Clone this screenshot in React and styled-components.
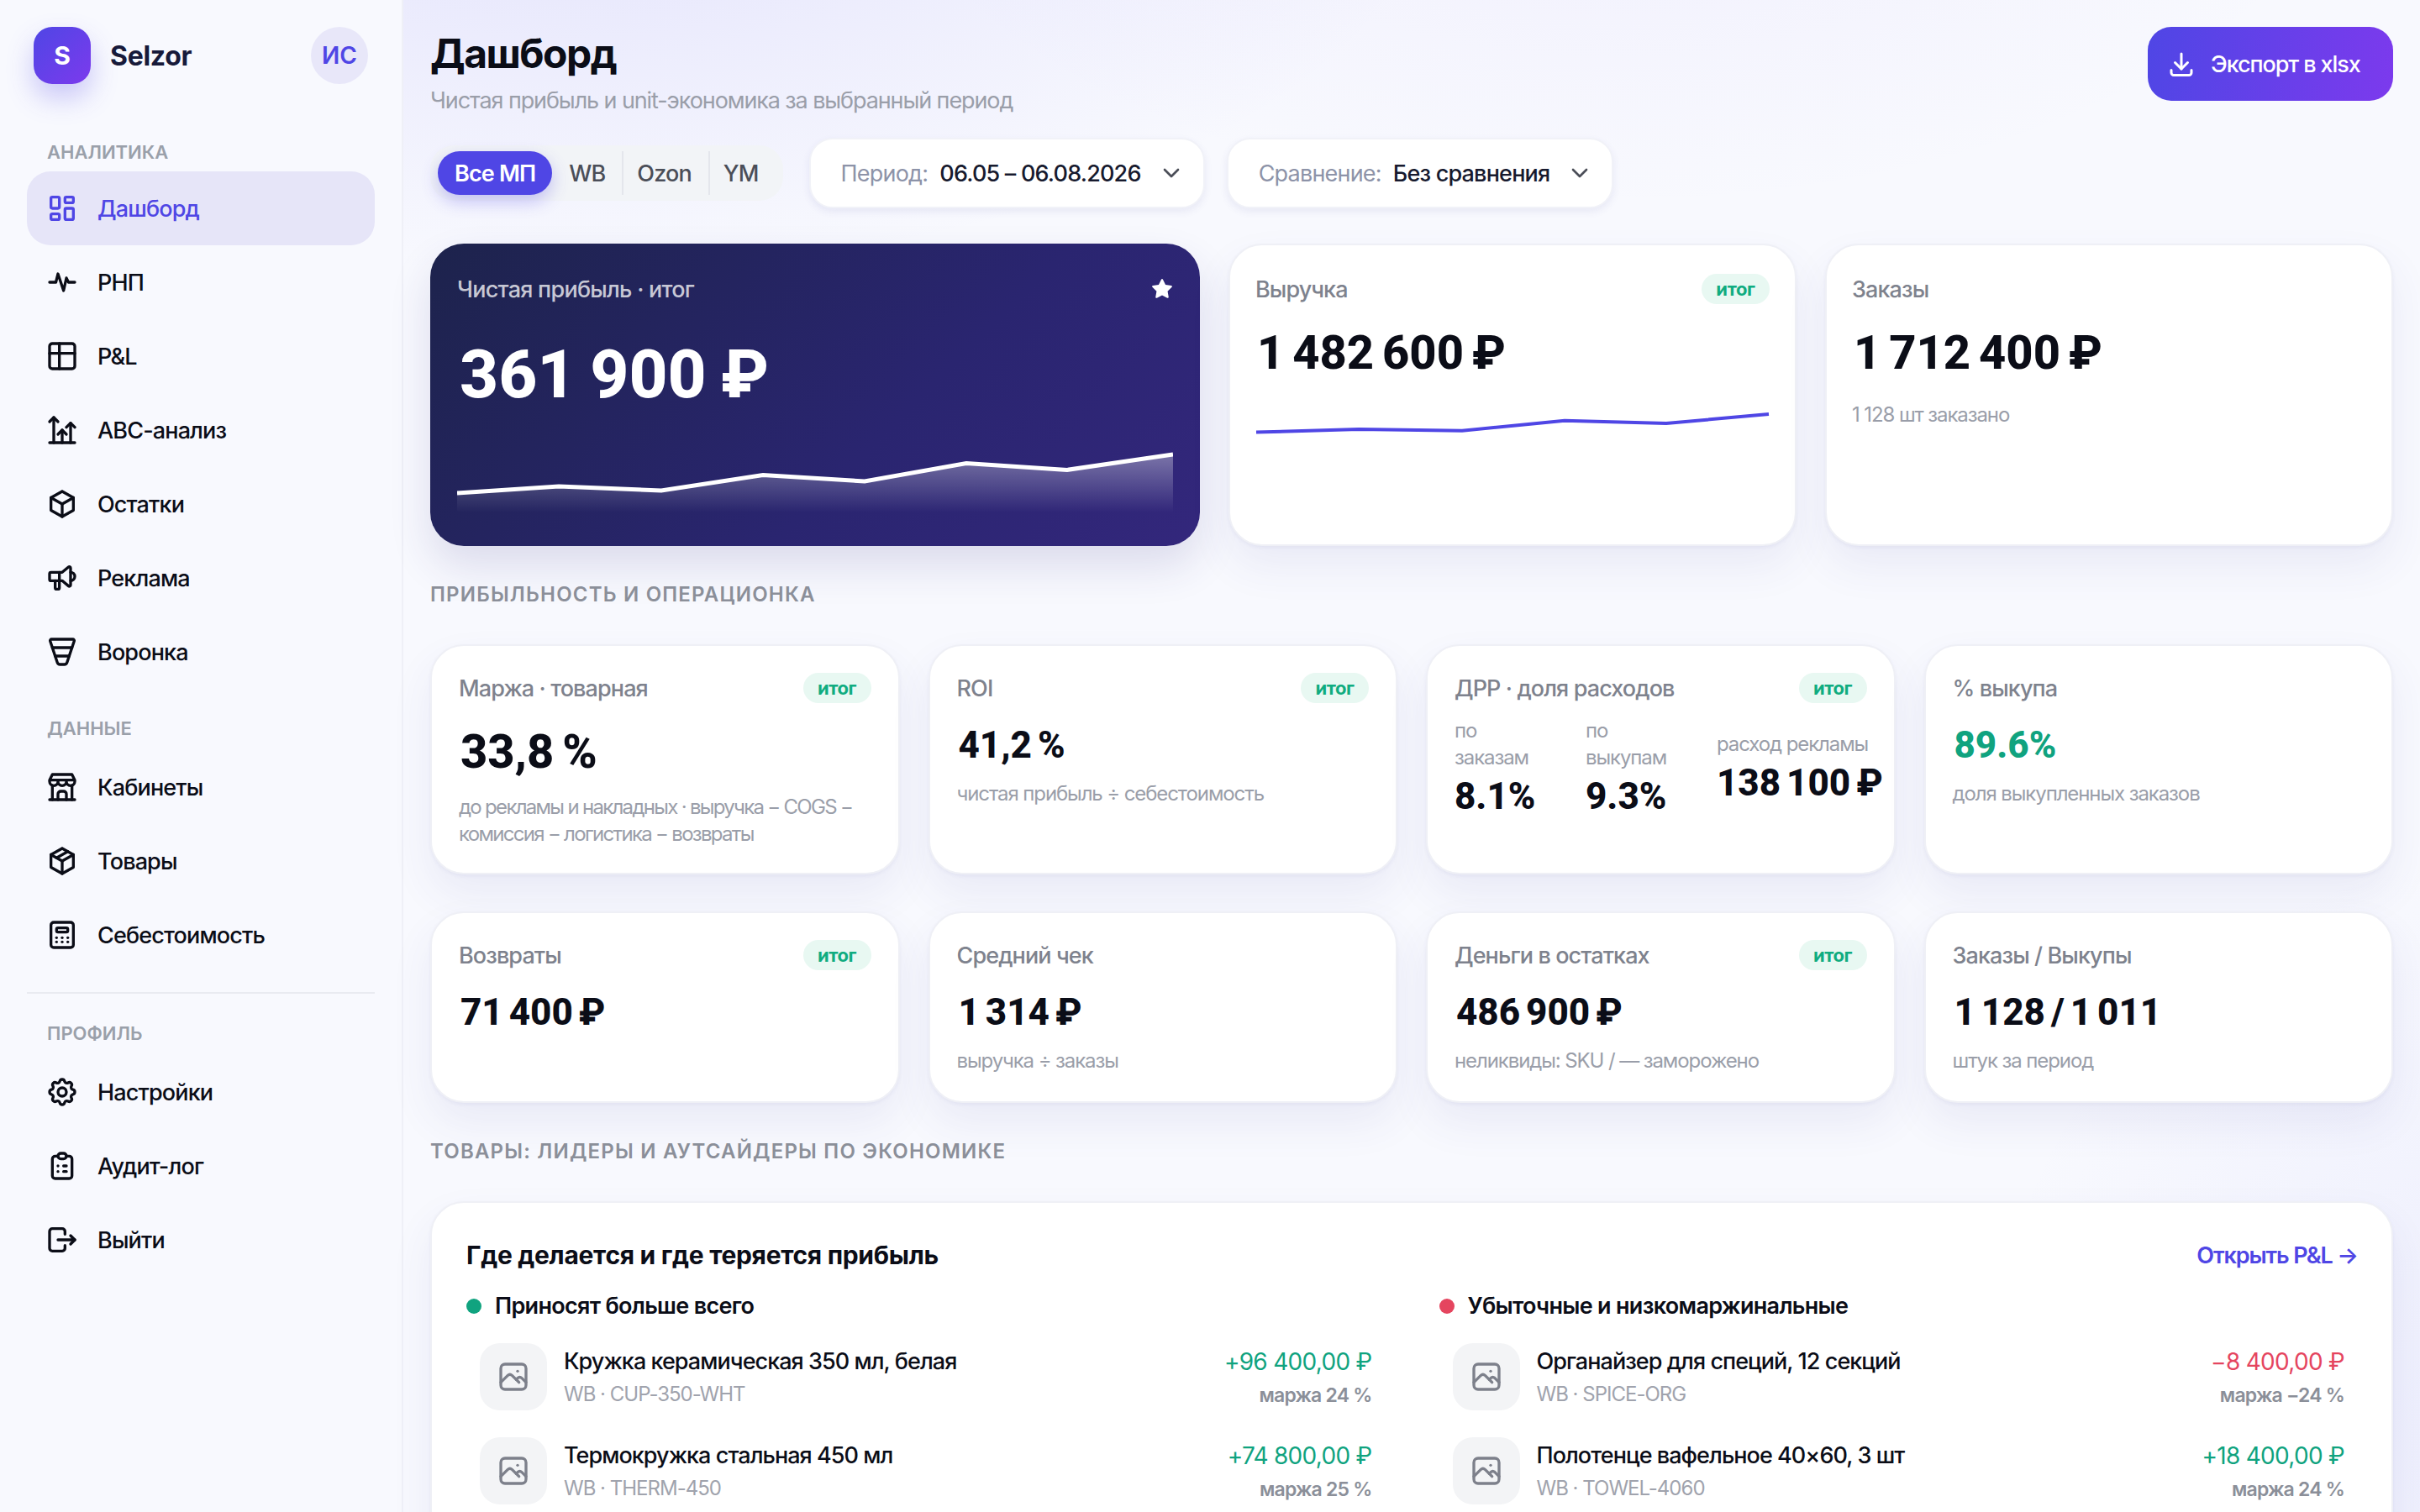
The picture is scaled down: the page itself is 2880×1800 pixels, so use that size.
import React from "react";
import styled, { createGlobalStyle } from "styled-components";
import {
  TbLayoutDashboard,
  TbActivityHeartbeat,
  TbTable,
  TbChartArrowsVertical,
  TbBox,
  TbSpeakerphone,
  TbChartFunnel,
  TbBuildingStore,
  TbPackage,
  TbCalculator,
  TbSettings,
  TbClipboardList,
  TbLogout,
  TbDownload,
  TbChevronDown,
  TbStarFilled,
  TbPhoto,
} from "react-icons/tb";

const GlobalStyle = createGlobalStyle`
  * { box-sizing: border-box; }
  html, body { margin: 0; padding: 0; }
  body {
    font-family: "Inter", "Noto Sans", sans-serif;
    color: #0b0d17;
    background: #f8f9fe;
  }
`;

const Shell = styled.div`
  display: grid;
  grid-template-columns: 480px 1fr;
  height: 100vh;
  overflow: hidden;
`;

const Sidebar = styled.aside`
  background: #f8f9fe;
  border-right: 2px solid #eff0f7;
  padding: 32px 32px 0;
`;

const Brand = styled.div`
  display: flex;
  align-items: center;
  padding: 0 8px;
  margin-bottom: 63px;
`;

const LogoMark = styled.div`
  width: 68px;
  height: 68px;
  border-radius: 22px;
  background: linear-gradient(135deg, #4f46e5, #7c3aed);
  box-shadow: 0 16px 32px rgba(79, 70, 229, 0.28);
  color: #fff;
  font-size: 30px;
  font-weight: 700;
  display: flex;
  align-items: center;
  justify-content: center;
`;

const BrandName = styled.div`
  margin-left: 23px;
  font-size: 32px;
  font-weight: 700;
  letter-spacing: -0.3px;
  color: #171a3a;
  flex: 1;
`;

const Avatar = styled.div`
  width: 68px;
  height: 68px;
  border-radius: 50%;
  background: #e8e7f9;
  color: #4f46e5;
  font-size: 28px;
  font-weight: 600;
  display: flex;
  align-items: center;
  justify-content: center;
`;

const NavLabel = styled.div`
  height: 36px;
  line-height: 36px;
  padding-left: 24px;
  margin-top: ${(p) => (p.$first ? "0" : "29px")};
  margin-bottom: ${(p) => (p.$first ? "5px" : "8px")};
  font-size: 22px;
  font-weight: 600;
  text-transform: uppercase;
  color: #9aa0aa;
`;

const NavItem = styled.div`
  height: 88px;
  display: flex;
  align-items: center;
  gap: 22px;
  padding-left: 22px;
  border-radius: 28px;
  font-size: 27px;
  font-weight: 500;
  letter-spacing: -0.85px;
  color: ${(p) => (p.$active ? "#4f46e5" : "#0b0d17")};
  background: ${(p) => (p.$active ? "#e6e5f8" : "transparent")};
  svg {
    width: 40px;
    height: 40px;
    flex: none;
  }
`;

const NavDivider = styled.div`
  height: 2px;
  background: #e9ebf1;
  margin-top: 24px;
`;

const Main = styled.main`
  padding: 32px 32px 0;
  min-width: 0;
  background:
    radial-gradient(1500px 700px at 8% -8%, rgba(99, 90, 240, 0.14), transparent 70%),
    radial-gradient(1300px 700px at 60% -12%, rgba(140, 110, 240, 0.08), transparent 70%),
    radial-gradient(900px 1000px at 104% 85%, rgba(99, 102, 241, 0.08), transparent 70%),
    #f8f9fe;
`;

const PageHead = styled.header`
  display: flex;
  justify-content: space-between;
  align-items: flex-start;
  margin-bottom: 24px;
`;

const PageTitle = styled.h1`
  margin: 0 0 4px;
  font-size: 48px;
  line-height: 64px;
  font-weight: 700;
  letter-spacing: -1.5px;
  color: #0b0d17;
`;

const PageSub = styled.div`
  font-size: 27px;
  line-height: 40px;
  letter-spacing: -1.1px;
  color: #9a9ea9;
`;

const ExportButton = styled.button`
  width: 292px;
  height: 88px;
  padding: 0 0 0 22px;
  border: none;
  border-radius: 28px;
  background: linear-gradient(100deg, #4f46e5, #7c3aed);
  color: #fff;
  font-family: inherit;
  font-size: 27px;
  font-weight: 500;
  letter-spacing: -1.1px;
  display: flex;
  align-items: center;
  gap: 17px;
  svg {
    width: 36px;
    height: 36px;
  }
`;

const Filters = styled.div`
  display: flex;
  align-items: center;
  gap: 26px;
  margin-bottom: 42px;
`;

const Segments = styled.div`
  display: flex;
  align-items: center;
  height: 66px;
  padding: 7px 9px;
  margin-right: 5px;
  border-radius: 28px;
  background: #f2f4f7;
`;

const Segment = styled.div`
  height: 52px;
  padding: 0 20px 0 ${(p) => (p.$divided ? "16px" : "20px")};
  display: flex;
  align-items: center;
  border-radius: ${(p) => (p.$active ? "26px" : "0")};
  font-size: 27px;
  letter-spacing: -0.85px;
  font-weight: ${(p) => (p.$active ? 600 : 500)};
  color: ${(p) => (p.$active ? "#fff" : "#4b4e58")};
  background: ${(p) => (p.$active ? "#4f46e5" : "transparent")};
  box-shadow: ${(p) => (p.$active ? "0 8px 20px rgba(79,70,229,.3)" : "none")};
  border-left: ${(p) => (p.$divided ? "2px solid #e4e6ec" : "none")};
`;

const Select = styled.div`
  height: 84px;
  padding: 0 22px 0 36px;
  display: flex;
  align-items: center;
  gap: 14px;
  background: #fff;
  border-radius: 28px;
  border: 2px solid #f1f2f8;
  box-shadow: 0 4px 10px rgba(70, 70, 150, 0.09);
  font-size: 27px;
  letter-spacing: -0.8px;
  white-space: nowrap;
  svg {
    width: 32px;
    height: 32px;
    color: #4b4e58;
    margin-left: 6px;
  }
`;

const SelectName = styled.span`
  color: #8d93a8;
`;

const SelectValue = styled.span`
  color: #171a2e;
  font-weight: 500;
`;

const TopGrid = styled.section`
  display: grid;
  grid-template-columns: 1.355fr 1fr 1fr;
  gap: 34px;
`;

const Card = styled.div`
  background: #fff;
  border: 2px solid #eff0f6;
  border-radius: 40px;
  padding: 32px;
  box-shadow: 0 24px 50px rgba(70, 70, 150, 0.08), 0 2px 4px rgba(70, 70, 150, 0.06);
  min-width: 0;
`;

const StatCard = styled(Card)`
  height: 360px;
  padding: 34px 30px 32px;
`;

const HeroCard = styled.div`
  height: 360px;
  padding: 36px 32px 40px;
  display: flex;
  flex-direction: column;
  border-radius: 40px;
  background: linear-gradient(135deg, #1d234c 0%, #2a2570 60%, #33277c 100%);
  box-shadow: 0 24px 50px rgba(50, 40, 130, 0.14);
  color: #fff;
`;

const CardHead = styled.div`
  display: flex;
  align-items: center;
  justify-content: space-between;
  min-height: 36px;
  margin-bottom: 24px;
`;

const HeroHead = styled(CardHead)`
  margin-bottom: 36px;
  svg {
    width: 26px;
    height: 26px;
  }
`;

const HeroLabel = styled.div`
  font-size: 27px;
  font-weight: 500;
  letter-spacing: -0.75px;
  color: rgba(255, 255, 255, 0.76);
`;

const HeroValue = styled.div`
  font-family: "Roboto", "Inter", sans-serif;
  font-size: 80px;
  line-height: 96px;
  font-weight: 800;
  word-spacing: -3px;
  padding-left: 3px;
`;

const HeroChart = styled.svg`
  display: block;
  width: 100%;
  height: 80px;
  margin-top: auto;
`;

const LineChart = styled.svg`
  display: block;
  width: 100%;
  height: 40px;
  margin-top: 28px;
`;

const CardLabel = styled.div`
  font-size: 27px;
  font-weight: 500;
  letter-spacing: -0.9px;
  color: #7e828d;
`;

const Badge = styled.span`
  width: 81px;
  height: 36px;
  display: flex;
  align-items: center;
  justify-content: center;
  border-radius: 18px;
  background: #e8f8f2;
  color: #10ac80;
  font-size: 22px;
  font-weight: 700;
  letter-spacing: -0.4px;
`;

const Value = styled.div`
  font-family: "Roboto", "Inter", sans-serif;
  font-size: ${(p) => (p.$big ? "56px" : "44px")};
  line-height: ${(p) => (p.$big ? "68px" : "52px")};
  font-weight: 800;
  word-spacing: -4px;
  color: ${(p) => (p.$good ? "#10a37f" : "#0b0d17")};
  margin-bottom: ${(p) => (p.$tight ? "24px" : "16px")};
  padding-left: 2px;
  white-space: nowrap;
`;

const Note = styled.div`
  font-size: 24px;
  line-height: 32px;
  letter-spacing: ${(p) => (p.$dense ? "-1.7px" : "-1.1px")};
  color: #9a9ea9;
`;

const StackNote = styled(Note)`
  width: min-content;
`;

const SectionTitle = styled.h2`
  margin: 40px 0 41px;
  font-size: 24px;
  line-height: 36px;
  font-weight: 600;
  letter-spacing: 1.2px;
  text-transform: uppercase;
  color: #8b8f99;
`;

const KpiGrid = styled.section`
  display: grid;
  grid-template-columns: repeat(4, 1fr);
  gap: 44px 34px;
`;

const KpiCard = styled(Card)`
  height: ${(p) => (p.$short ? "228px" : "274px")};
`;

const Split = styled.div`
  display: grid;
  grid-template-columns: 132px 132px auto;
  column-gap: 24px;
  align-items: center;
  margin-top: -7px;
`;

const SplitValue = styled(Value)`
  margin: 4px 0 0;
  padding-left: 0;
`;

const Panel = styled(Card)`
  padding: 42px 40px 200px 41px;
`;

const PanelHead = styled.div`
  display: flex;
  justify-content: space-between;
  align-items: center;
  margin-bottom: 23px;
`;

const PanelTitle = styled.div`
  font-size: 30px;
  line-height: 40px;
  font-weight: 700;
  letter-spacing: -0.3px;
`;

const PanelLink = styled.div`
  font-size: 27px;
  font-weight: 600;
  letter-spacing: -1.1px;
  color: #4f46e5;
`;

const Columns = styled.div`
  display: grid;
  grid-template-columns: 1fr 1fr;
  column-gap: 64px;
`;

const ColumnTitle = styled.div`
  display: flex;
  align-items: center;
  gap: 16px;
  font-size: 27px;
  line-height: 36px;
  font-weight: 600;
  letter-spacing: -0.7px;
  margin-bottom: 10px;
`;

const Dot = styled.span`
  width: 18px;
  height: 18px;
  border-radius: 50%;
  background: ${(p) => (p.$bad ? "#e5455f" : "#10a37f")};
`;

const ProductRow = styled.div`
  display: flex;
  align-items: center;
  gap: 20px;
  padding: 16px;
`;

const Thumb = styled.div`
  width: 80px;
  height: 80px;
  flex: none;
  border-radius: 24px;
  background: #f3f4f6;
  color: #7d808b;
  display: flex;
  align-items: center;
  justify-content: center;
  svg {
    width: 40px;
    height: 40px;
  }
`;

const ProductInfo = styled.div`
  flex: 1;
  min-width: 0;
`;

const ProductName = styled.div`
  font-size: 27px;
  line-height: 36px;
  font-weight: 500;
  letter-spacing: -0.95px;
  margin-bottom: 5px;
`;

const ProductSku = styled.div`
  font-size: 24px;
  line-height: 32px;
  letter-spacing: -1px;
  color: #a0a3ad;
`;

const ProductNumbers = styled.div`
  text-align: right;
`;

const Amount = styled.div`
  font-size: 28px;
  line-height: 36px;
  letter-spacing: -0.7px;
  color: ${(p) => (p.$bad ? "#e5455f" : "#10a37f")};
  margin: 2px 0 6px;
`;

const MarginText = styled.div`
  font-size: 23px;
  line-height: 32px;
  font-weight: 600;
  letter-spacing: -0.8px;
  color: #8b8f99;
`;

const navGroups = [
  {
    title: "Аналитика",
    items: [
      ["Дашборд", TbLayoutDashboard],
      ["РНП", TbActivityHeartbeat],
      ["P&L", TbTable],
      ["ABC-анализ", TbChartArrowsVertical],
      ["Остатки", TbBox],
      ["Реклама", TbSpeakerphone],
      ["Воронка", TbChartFunnel],
    ],
  },
  {
    title: "Данные",
    items: [
      ["Кабинеты", TbBuildingStore],
      ["Товары", TbPackage],
      ["Себестоимость", TbCalculator],
    ],
  },
  {
    title: "Профиль",
    items: [
      ["Настройки", TbSettings],
      ["Аудит-лог", TbClipboardList],
      ["Выйти", TbLogout],
    ],
  },
];

const leaders = [
  { name: "Кружка керамическая 350 мл, белая", sku: "WB · CUP-350-WHT", amount: "+96 400,00 ₽", margin: "маржа 24 %" },
  { name: "Термокружка стальная 450 мл", sku: "WB · THERM-450", amount: "+74 800,00 ₽", margin: "маржа 25 %" },
];

const losers = [
  { name: "Органайзер для специй, 12 секций", sku: "WB · SPICE-ORG", amount: "−8 400,00 ₽", margin: "маржа −24 %", bad: true },
  { name: "Полотенце вафельное 40×60, 3 шт", sku: "WB · TOWEL-4060", amount: "+18 400,00 ₽", margin: "маржа 24 %" },
];

const heroPoints = "0,57 121,49 243,54 364,35.5 485,43 606,21.6 726,29.4 852,11";

const ProductList = ({ items }) =>
  items.map((item) => (
    <ProductRow key={item.sku}>
      <Thumb>
        <TbPhoto />
      </Thumb>
      <ProductInfo>
        <ProductName>{item.name}</ProductName>
        <ProductSku>{item.sku}</ProductSku>
      </ProductInfo>
      <ProductNumbers>
        <Amount $bad={item.bad}>{item.amount}</Amount>
        <MarginText>{item.margin}</MarginText>
      </ProductNumbers>
    </ProductRow>
  ));

const App = () => {
  return (
    <>
      <GlobalStyle />
      <Shell>
        <Sidebar>
          <Brand>
            <LogoMark>S</LogoMark>
            <BrandName>Selzor</BrandName>
            <Avatar>ИС</Avatar>
          </Brand>
          {navGroups.map((group, i) => (
            <React.Fragment key={group.title}>
              {i === 2 && <NavDivider />}
              <NavLabel $first={i === 0}>{group.title}</NavLabel>
              {group.items.map(([label, Icon]) => (
                <NavItem key={label} $active={label === "Дашборд"}>
                  <Icon />
                  {label}
                </NavItem>
              ))}
            </React.Fragment>
          ))}
        </Sidebar>

        <Main>
          <PageHead>
            <div>
              <PageTitle>Дашборд</PageTitle>
              <PageSub>Чистая прибыль и unit-экономика за выбранный период</PageSub>
            </div>
            <ExportButton>
              <TbDownload />
              Экспорт в xlsx
            </ExportButton>
          </PageHead>

          <Filters>
            <Segments>
              <Segment $active>Все МП</Segment>
              <Segment>WB</Segment>
              <Segment $divided>Ozon</Segment>
              <Segment $divided>YM</Segment>
            </Segments>
            <Select>
              <SelectName>Период:</SelectName>
              <SelectValue>06.05 – 06.08.2026</SelectValue>
              <TbChevronDown />
            </Select>
            <Select>
              <SelectName>Сравнение:</SelectName>
              <SelectValue>Без сравнения</SelectValue>
              <TbChevronDown />
            </Select>
          </Filters>

          <TopGrid>
            <HeroCard>
              <HeroHead>
                <HeroLabel>Чистая прибыль · итог</HeroLabel>
                <TbStarFilled />
              </HeroHead>
              <HeroValue>361 900 ₽</HeroValue>
              <HeroChart viewBox="0 0 852 80">
                <defs>
                  <linearGradient id="heroFill" x1="0" y1="0" x2="0" y2="1">
                    <stop offset="0%" stopColor="#fff" stopOpacity="0.36" />
                    <stop offset="100%" stopColor="#fff" stopOpacity="0" />
                  </linearGradient>
                </defs>
                <polygon points={`0,80 ${heroPoints} 852,80`} fill="url(#heroFill)" />
                <polyline points={heroPoints} fill="none" stroke="#fff" strokeWidth="5" />
              </HeroChart>
            </HeroCard>
            <StatCard>
              <CardHead>
                <CardLabel>Выручка</CardLabel>
                <Badge>итог</Badge>
              </CardHead>
              <Value $big>1 482 600 ₽</Value>
              <LineChart viewBox="0 0 610 40">
                <polyline
                  points="0,32.6 122,29 245,30.8 367,18.7 488,22 610,11"
                  fill="none"
                  stroke="#4f46e5"
                  strokeWidth="4"
                />
              </LineChart>
            </StatCard>
            <StatCard>
              <CardHead>
                <CardLabel>Заказы</CardLabel>
              </CardHead>
              <Value $big $tight>1 712 400 ₽</Value>
              <Note>1 128 шт заказано</Note>
            </StatCard>
          </TopGrid>

          <SectionTitle>Прибыльность и операционка</SectionTitle>
          <KpiGrid>
            <KpiCard>
              <CardHead>
                <CardLabel>Маржа · товарная</CardLabel>
                <Badge>итог</Badge>
              </CardHead>
              <Value $big>33,8 %</Value>
              <Note $dense>до рекламы и накладных · выручка − COGS − комиссия − логистика − возвраты</Note>
            </KpiCard>
            <KpiCard>
              <CardHead>
                <CardLabel>ROI</CardLabel>
                <Badge>итог</Badge>
              </CardHead>
              <Value>41,2 %</Value>
              <Note>чистая прибыль ÷ себестоимость</Note>
            </KpiCard>
            <KpiCard>
              <CardHead>
                <CardLabel>ДРР · доля расходов</CardLabel>
                <Badge>итог</Badge>
              </CardHead>
              <Split>
                <div>
                  <StackNote>по заказам</StackNote>
                  <SplitValue>8.1%</SplitValue>
                </div>
                <div>
                  <StackNote>по выкупам</StackNote>
                  <SplitValue>9.3%</SplitValue>
                </div>
                <div>
                  <Note>расход рекламы</Note>
                  <SplitValue>138 100 ₽</SplitValue>
                </div>
              </Split>
            </KpiCard>
            <KpiCard>
              <CardHead>
                <CardLabel>% выкупа</CardLabel>
              </CardHead>
              <Value $good>89.6%</Value>
              <Note>доля выкупленных заказов</Note>
            </KpiCard>
            <KpiCard $short>
              <CardHead>
                <CardLabel>Возвраты</CardLabel>
                <Badge>итог</Badge>
              </CardHead>
              <Value>71 400 ₽</Value>
            </KpiCard>
            <KpiCard $short>
              <CardHead>
                <CardLabel>Средний чек</CardLabel>
              </CardHead>
              <Value>1 314 ₽</Value>
              <Note>выручка ÷ заказы</Note>
            </KpiCard>
            <KpiCard $short>
              <CardHead>
                <CardLabel>Деньги в остатках</CardLabel>
                <Badge>итог</Badge>
              </CardHead>
              <Value>486 900 ₽</Value>
              <Note>неликвиды: SKU / — заморожено</Note>
            </KpiCard>
            <KpiCard $short>
              <CardHead>
                <CardLabel>Заказы / Выкупы</CardLabel>
              </CardHead>
              <Value>1 128 / 1 011</Value>
              <Note>штук за период</Note>
            </KpiCard>
          </KpiGrid>

          <SectionTitle>Товары: лидеры и аутсайдеры по экономике</SectionTitle>
          <Panel>
            <PanelHead>
              <PanelTitle>Где делается и где теряется прибыль</PanelTitle>
              <PanelLink>Открыть P&amp;L →</PanelLink>
            </PanelHead>
            <Columns>
              <div>
                <ColumnTitle>
                  <Dot />
                  Приносят больше всего
                </ColumnTitle>
                <ProductList items={leaders} />
              </div>
              <div>
                <ColumnTitle>
                  <Dot $bad />
                  Убыточные и низкомаржинальные
                </ColumnTitle>
                <ProductList items={losers} />
              </div>
            </Columns>
          </Panel>
        </Main>
      </Shell>
    </>
  );
};

export default App;
